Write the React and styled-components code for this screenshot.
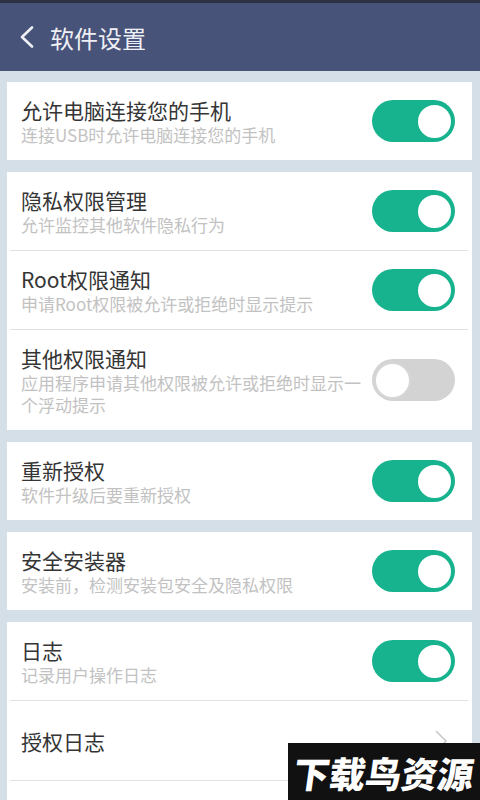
import React from "react";
import styled, { createGlobalStyle } from "styled-components";

const Global = createGlobalStyle`
  html, body { margin: 0; padding: 0; background: #d5dfe7; overflow: hidden; }
  body { font-family: "Noto Sans CJK SC", "Noto Sans", sans-serif; }
  * { box-sizing: border-box; }
`;

const Page = styled.div`
  width: 480px;
  height: 800px;
  background: #d5dfe7;
  position: relative;
  overflow: hidden;
`;

const StatusStripe = styled.div`
  height: 3px;
  background: #2c3144;
`;

const Header = styled.header`
  height: 68px;
  background: #48537a;
  display: flex;
  align-items: center;
  padding-left: 19px;
  gap: 15px;
`;

const HeaderTitle = styled.h1`
  margin: 0;
  font-size: 24px;
  font-weight: 400;
  color: #eef0f5;
`;

const Content = styled.main`
  display: flex;
  flex-direction: column;
  gap: 12px;
  padding: 11px 8px 0 7px;
`;

const Card = styled.section`
  background: #ffffff;
  display: flex;
  flex-direction: column;
`;

const Row = styled.div`
  display: flex;
  align-items: center;
  min-height: ${(p) => (p.$tall ? 79 : 78)}px;
  padding: 14px 17px 14px 14px;
`;

const Texts = styled.div`
  flex: 1;
  display: flex;
  flex-direction: column;
  min-width: 0;
  margin-right: 8px;
`;

const Title = styled.div`
  font-size: 21px;
  line-height: 28px;
  color: #353535;
`;

const Sub = styled.div`
  font-size: 17px;
  line-height: 22px;
  color: #c2c2c2;
`;

const Divider = styled.div`
  height: 1px;
  background: #e2e2e2;
  margin: 0 4px 0 3px;
`;

const Track = styled.div`
  flex: none;
  width: 83px;
  height: 42px;
  border-radius: 21px;
  background: ${(p) => (p.$on ? "#17b28e" : "#d3d3d3")};
  display: flex;
  align-items: center;
  justify-content: ${(p) => (p.$on ? "flex-end" : "flex-start")};
  padding: 0 2px;
`;

const Knob = styled.div`
  width: 37px;
  height: 37px;
  border-radius: 50%;
  background: #ffffff;
  border: 2px solid ${(p) => (p.$on ? "#17b28e" : "#d6d6d6")};
`;

const Chevron = styled.svg`
  flex: none;
  width: 14px;
  height: 24px;
  margin-right: 7px;
`;

const Watermark = styled.div`
  position: absolute;
  right: 0;
  bottom: 0;
  width: 192px;
  height: 57px;
  background: #111111;
  display: flex;
  align-items: center;
  justify-content: center;
`;

const WatermarkText = styled.span`
  color: #ffffff;
  font-family: "Noto Sans CJK SC", sans-serif;
  font-weight: 900;
  font-size: 36px;
  line-height: 40px;
  transform: skewX(-8deg);
  display: inline-block;
`;

function Toggle({ on }) {
  return (
    <Track $on={on}>
      <Knob $on={on} />
    </Track>
  );
}

function SettingRow({ title, sub, on }) {
  return (
    <Row>
      <Texts>
        <Title>{title}</Title>
        {sub && <Sub>{sub}</Sub>}
      </Texts>
      <Toggle on={on} />
    </Row>
  );
}

function BackIcon() {
  return (
    <svg width="16" height="22" viewBox="0 0 16 22">
      <polyline
        points="13,1.5 3,11 13,20.5"
        fill="none"
        stroke="#eef0f5"
        strokeWidth="2.6"
        strokeLinecap="round"
        strokeLinejoin="round"
      />
    </svg>
  );
}

export default function App() {
  return (
    <Page>
      <Global />
      <StatusStripe />
      <Header>
        <BackIcon />
        <HeaderTitle>软件设置</HeaderTitle>
      </Header>
      <Content>
        <Card>
          <SettingRow title="允许电脑连接您的手机" sub="连接USB时允许电脑连接您的手机" on />
        </Card>
        <Card>
          <SettingRow title="隐私权限管理" sub="允许监控其他软件隐私行为" on />
          <Divider />
          <SettingRow title="Root权限通知" sub="申请Root权限被允许或拒绝时显示提示" on />
          <Divider />
          <SettingRow
            title="其他权限通知"
            sub="应用程序申请其他权限被允许或拒绝时显示一个浮动提示"
            on={false}
          />
        </Card>
        <Card>
          <SettingRow title="重新授权" sub="软件升级后要重新授权" on />
        </Card>
        <Card>
          <SettingRow title="安全安装器" sub="安装前，检测安装包安全及隐私权限" on />
        </Card>
        <Card>
          <SettingRow title="日志" sub="记录用户操作日志" on />
          <Divider />
          <Row $tall>
            <Texts>
              <Title>授权日志</Title>
            </Texts>
            <Chevron viewBox="0 0 14 24">
              <polyline
                points="2,2 12,12 2,22"
                fill="none"
                stroke="#c8c8c8"
                strokeWidth="1.5"
              />
            </Chevron>
          </Row>
          <Divider />
          <Row $tall />
        </Card>
      </Content>
      <Watermark>
        <WatermarkText>下载鸟资源</WatermarkText>
      </Watermark>
    </Page>
  );
}
